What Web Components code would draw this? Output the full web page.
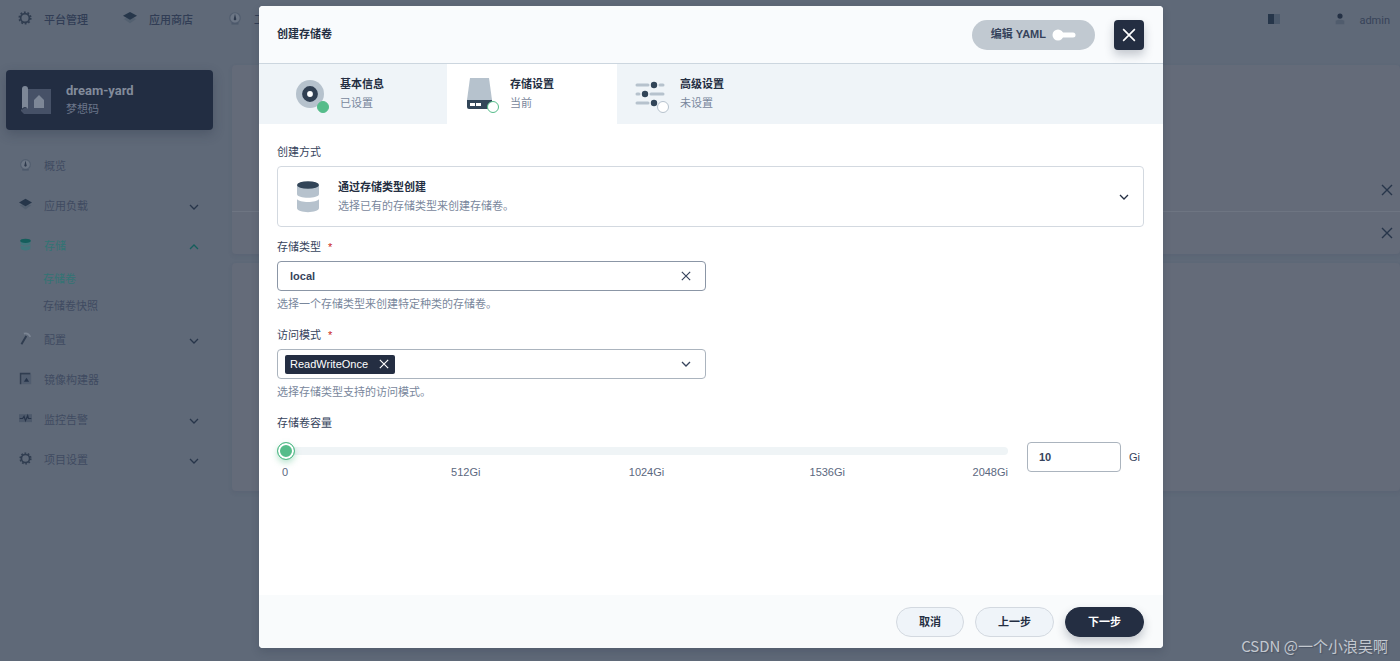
<!DOCTYPE html>
<html lang="zh-CN">
<head>
<meta charset="utf-8">
<meta name="viewport" content="width=device-width, initial-scale=1">
<title>创建存储卷</title>
<style>
  html, body { margin: 0; min-height: 100vh; }
  body {
    background: #5f6978;
    color: #3b475c;
    font: 11px/19px "Liberation Sans", "Noto Sans CJK SC", sans-serif;
    --ink: #242e42;
    --muted: #79879c;
    --green: #55bc8a;
    --line: #d3d9e0;
  }
</style>
</head>
<body>
<ks-app></ks-app>
<ks-modal>
  <span slot="title">创建存储卷</span>
  <ks-tab slot="tabs" icon="disc" state="done"><span>基本信息</span><span slot="status">已设置</span></ks-tab>
  <ks-tab slot="tabs" icon="drive" state="current"><span>存储设置</span><span slot="status">当前</span></ks-tab>
  <ks-tab slot="tabs" icon="sliders" state="todo"><span>高级设置</span><span slot="status">未设置</span></ks-tab>
  <ks-volume-form></ks-volume-form>
  <ks-button slot="footer">取消</ks-button>
  <ks-button slot="footer">上一步</ks-button>
  <ks-button slot="footer" primary>下一步</ks-button>
</ks-modal>
<ks-watermark>CSDN @一个小浪吴啊</ks-watermark>

<script>
const ICONS = {
  gear: ['0 0 16 16', '<g fill="none" stroke="#303d50"><circle cx="8" cy="8" r="5" stroke-width="2"/><circle cx="8" cy="8" r="6.6" stroke-width="1.8" stroke-dasharray="2.1 2.05"/></g>'],
  layers: ['0 0 16 16', '<path fill="#536070" d="M1 9l7-3 7 3-7 5z"/><path fill="#26364a" d="M0 5.5L8 1l8 4.500L8 10z"/>'],
  gauge: ['0 0 16 16', '<circle cx="8" cy="8" r="6" fill="#6c7685" stroke="#525e6f" stroke-width="1.4"/><path fill="#2d394c" d="M8 3l1.2 5.2a1.5 1.5 0 1 1-2.4 0z"/><path d="M4 14.500h8" stroke="#4d596b" stroke-width="2"/>'],
  store: ['0 0 16 16', '<path fill="#40767c" d="M2 3v10c0 3 12 3 12 0V3z"/><path d="M2 8c0 2.600 12 2.600 12 0" fill="none" stroke="#5f6978"/><ellipse cx="8" cy="3.400" rx="6.500" ry="2.600" fill="#155e5c"/>'],
  hammer: ['0 0 16 16', '<path d="M3 15L9 5" stroke="#303d50" stroke-width="2.400"/><path d="M6 2c3-1 6 0 8 4" fill="none" stroke="#7b8593" stroke-width="2"/>'],
  image: ['0 0 16 16', '<path fill="#515d6f" d="M4 3h11v12H4z"/><path d="M2 15V2h12" fill="none" stroke="#303d50" stroke-width="2"/><path fill="#26344a" d="M6 12l3.200-5 3.300 5z"/>'],
  monitor: ['0 0 18 16', '<path fill="#4d596b" d="M0 2h18v11H0z"/><path d="M1 8h4l2-3 2 6 3-7 1 4h4" fill="none" stroke="#273449" stroke-width="1.600"/>'],
  down: ['0 0 12 12', '<path d="M2 4l4 4 4-4" fill="none" stroke="currentColor" stroke-width="1.300"/>'],
  up: ['0 0 12 12', '<path d="M2 8l4-4 4 4" fill="none" stroke="currentColor" stroke-width="1.300"/>'],
  close: ['0 0 12 12', '<path d="M1 1l10 10M11 1L1 11" fill="none" stroke="currentColor" stroke-width="1.400"/>'],
  book: ['0 0 14 12', '<path fill="#26364a" d="M1 1h6v10H1z"/><path fill="#4b596b" d="M7 1h6v10H7z"/>'],
  user: ['0 0 12 14', '<path fill="#505c6d" d="M1 13V9l3-1h4l3 1v4z"/><circle cx="6" cy="3.600" r="3" fill="#243145"/>'],
  blueprint: ['0 0 30 30', '<path fill="#465167" d="M6 4h24v25H4z"/><path fill="#7d8797" d="M1 4a3 3 0 0 1 6 0v20a3 3 0 0 0-6 3z"/><path fill="#465167" d="M1 27a3 3 0 0 1 5-3v5H3z"/><path fill="#7d8797" d="M13 23v-8l5-5 5 5v8z"/>'],
  disc: ['0 0 30 30', '<circle cx="15" cy="15" r="14" fill="#b6c2cd"/><circle cx="15" cy="15" r="5.400" fill="#fff" stroke="#303f52" stroke-width="5"/>'],
  drive: ['0 0 30 34', '<path fill="#b6c2cd" d="M5 1h19l3 22H2z"/><path fill="#324558" d="M2 23h25v7a2 2 0 0 1-2 2H4a2 2 0 0 1-2-2z"/><path fill="#fff" d="M5 26h5v3H5zM11 26h5v3h-5z"/>'],
  sliders: ['0 0 30 30', '<path d="M2 6h11M25 6h3M2 15h2M16 15h12M2 24h11" stroke="#b6c2cd" stroke-width="3" stroke-linecap="round"/><g fill="#324558"><circle cx="19" cy="6" r="3.200"/><circle cx="10" cy="15" r="3.200"/><circle cx="19" cy="24" r="3.200"/></g>'],
  database: ['0 0 24 34', '<path fill="#b6c2cd" d="M1 5v9c0 5 22 5 22 0V5zM1 19v9c0 5.500 22 5.500 22 0v-9c-2 4-20 4-22 0z"/><ellipse cx="12" cy="5" rx="11" ry="3.800" fill="#324558"/>']
};

function define(tag, html, setup) {
  const template = document.createElement('template');
  template.innerHTML = html;
  customElements.define(tag, class extends HTMLElement {
    connectedCallback() {
      if (this.shadowRoot) return;
      this.attachShadow({ mode: 'open' }).append(template.content.cloneNode(true));
      if (setup) setup(this, this.shadowRoot);
    }
  });
}

define('ks-icon', `<style>
  :host { display: inline-flex; flex: none; width: 12px; height: 12px; }
  svg { width: 100%; height: 100%; display: block; }
</style><svg aria-hidden="true"></svg>`, (host, root) => {
  const [box, art] = ICONS[host.getAttribute('name')];
  const svg = root.querySelector('svg');
  svg.setAttribute('viewBox', box);
  svg.innerHTML = art;
});

define('ks-topbar', `<style>
  :host { display: flex; align-items: center; justify-content: space-between; height: 40px; padding: 0 10px 0 18px; }
  nav { display: flex; gap: 35px; }
  a { display: flex; align-items: center; gap: 12px; color: #313d55; text-decoration: none; white-space: nowrap; font-weight: 500; }
  a ks-icon { width: 14px; height: 14px; margin-bottom: 4px; }
  .right { display: flex; align-items: center; gap: 52px; }
  .right ks-icon { width: 14px; margin-bottom: 2px; }
  button { display: flex; align-items: center; gap: 12px; border: 0; padding: 0; background: none; color: #374359; font: 11px/19px Roboto, sans-serif; }
</style>
<nav aria-label="主导航">
  <a href="#platform"><ks-icon name="gear"></ks-icon>平台管理</a>
  <a href="#store"><ks-icon name="layers"></ks-icon>应用商店</a>
  <a href="#workbench"><ks-icon name="gauge"></ks-icon>工作台</a>
</nav>
<div class="right"><ks-icon name="book"></ks-icon><button type="button"><ks-icon name="user"></ks-icon>admin</button></div>`);

define('ks-project-card', `<style>
  :host { display: flex; align-items: center; gap: 15px; height: 60px; padding: 0 15px; border-radius: 4px; background: #222d42; box-shadow: 0 4px 12px rgba(36,46,66,.3); }
  ks-icon { width: 30px; height: 30px; }
  div { display: flex; flex-direction: column; color: #6c768a; }
  strong { font: 700 13px/19px Roboto, sans-serif; color: #8089a0; color: #828b9b; }
</style><ks-icon name="blueprint"></ks-icon><div><strong>dream-yard</strong><slot></slot></div>`);

define('ks-nav-item', `<style>
  :host { display: block; color: #3f4b61; }
  :host([active]) { color: #327474; }
  a { display: flex; align-items: center; gap: 12px; height: 40px; padding: 0 13px; color: inherit; text-decoration: none; }
  ks-icon { width: 13px; height: 13px; margin-bottom: 3px; }
  .label { flex: 1; }
  .arrow { width: 12px; height: 12px; margin: 2px 0 0; color: #27354a; }
  :host([active]) .arrow { color: #155e5c; }
  :host([sub]) a { height: 27px; padding-left: 37px; }
</style><a href="#nav"><span class="label"><slot></slot></span></a>`, (host, root) => {
  const link = root.querySelector('a');
  const add = (name, where) => {
    const icon = document.createElement('ks-icon');
    icon.setAttribute('name', name);
    if (where === 'append') icon.className = 'arrow';
    link[where](icon);
  };
  if (host.hasAttribute('icon')) add(host.getAttribute('icon'), 'prepend');
  if (host.hasAttribute('arrow')) add(host.getAttribute('arrow'), 'append');
});

define('ks-app', `<style>
  :host { display: block; min-height: 100vh; overflow: hidden; }
  .columns { display: grid; grid-template-columns: 207px minmax(0, 1fr); gap: 19px; padding: 25px 0 0 6px; }
  aside { padding-top: 5px; }
  nav { margin-top: 16px; }
  main { display: flex; flex-direction: column; gap: 9px; }
  section { border-radius: 4px; background: #646b79; box-shadow: 0 2px 4px rgba(54,67,90,.12); }
  .notices { padding-top: 104px; }
  .row { display: flex; justify-content: flex-end; align-items: center; height: 42px; padding-right: 7px; }
  .row + .row { border-top: 1px solid #6e7582; }
  .row button { display: flex; border: 0; padding: 0; background: none; color: #27354a; }
  .list { height: 228px; }
</style>
<ks-topbar></ks-topbar>
<div class="columns">
  <aside>
    <ks-project-card>梦想码</ks-project-card>
    <nav aria-label="项目导航">
      <ks-nav-item icon="gauge">概览</ks-nav-item>
      <ks-nav-item icon="layers" arrow="down">应用负载</ks-nav-item>
      <ks-nav-item icon="store" arrow="up" active>存储</ks-nav-item>
      <ks-nav-item sub active>存储卷</ks-nav-item>
      <ks-nav-item sub>存储卷快照</ks-nav-item>
      <ks-nav-item icon="hammer" arrow="down">配置</ks-nav-item>
      <ks-nav-item icon="image">镜像构建器</ks-nav-item>
      <ks-nav-item icon="monitor" arrow="down">监控告警</ks-nav-item>
      <ks-nav-item icon="gear" arrow="down">项目设置</ks-nav-item>
    </nav>
  </aside>
  <main>
    <section class="notices">
      <div class="row"><button type="button" aria-label="关闭提示"><ks-icon name="close"></ks-icon></button></div>
      <div class="row"><button type="button" aria-label="关闭提示"><ks-icon name="close"></ks-icon></button></div>
    </section>
    <section class="list"></section>
  </main>
</div>`);

define('ks-button', `<style>
  :host { display: inline-flex; }
  button { height: 30px; padding: 0 22px; border: 1px solid var(--line); border-radius: 15px; background: #eff4f9; color: var(--ink); font: inherit; font-weight: 700; }
  :host([primary]) button { border-color: var(--ink); background: var(--ink); color: #fff; box-shadow: 0 5px 10px rgba(36,46,66,.25); }
</style><button type="button"><slot></slot></button>`);

define('ks-tab', `<style>
  :host { display: block; }
  button { display: flex; align-items: center; gap: 15px; width: 170px; height: 60px; padding: 0 18px; border: 0; background: none; font: inherit; text-align: left; }
  :host([state=current]) button { background: #fff; }
  .art { position: relative; display: flex; flex: none; width: 30px; }
  .art ks-icon { width: 30px; height: 34px; }
  .dot { position: absolute; right: -4px; bottom: -2px; box-sizing: border-box; width: 12px; height: 12px; border: 1px solid var(--green); border-radius: 50%; background: #fff; }
  :host([state=done]) .dot { background: var(--green); }
  :host([state=todo]) .dot { border-color: #b6c2cd; }
  .text { display: flex; flex-direction: column; color: var(--muted); }
  strong { color: var(--ink); }
</style><button type="button" role="tab"><span class="art"><span class="dot"></span></span><span class="text"><strong><slot></slot></strong><slot name="status"></slot></span></button>`, (host, root) => {
  const icon = document.createElement('ks-icon');
  icon.setAttribute('name', host.getAttribute('icon'));
  root.querySelector('.art').prepend(icon);
  root.querySelector('button').setAttribute('aria-selected', host.getAttribute('state') === 'current');
  const status = host.querySelector('[slot=status]');
  host.setAttribute('aria-description', status ? status.textContent : '');
});

define('ks-modal', `<style>
  :host { position: absolute; inset: 0; display: flex; padding: 6px 237px 13px 259px; }
  .dialog { flex: 1; min-width: 0; display: flex; flex-direction: column; border-radius: 4px; background: #fff; box-shadow: 0 4px 8px rgba(36,46,66,.2); overflow: hidden; }
  header { display: flex; align-items: center; gap: 19px; height: 57px; padding: 0 19px 0 18px; border-bottom: 1px solid #ccd6df; background: #f9fbfd; }
  h1 { flex: 1; margin: 0; font-size: 11px; line-height: 19px; color: var(--ink); }
  .yaml { display: flex; align-items: center; gap: 6px; height: 30px; padding: 0 19px; border: 0; border-radius: 15px; background: #c1c9d1; color: #36435c; font: inherit; font-weight: 700; }
  .yaml svg { display: block; width: 24px; height: 12px; }
  .close { display: flex; align-items: center; justify-content: center; width: 30px; height: 30px; padding: 0; border: 0; border-radius: 4px; background: var(--ink); color: #fff; box-shadow: 0 5px 10px rgba(36,46,66,.25); }
  .close ks-icon { width: 14px; height: 14px; }
  .tabs { display: flex; padding-left: 18px; background: #eff4f8; }
  .body { flex: 1; padding: 18px 19px 18px 18px; }
  footer { display: flex; justify-content: flex-end; gap: 11px; padding: 12px 19px 11px; background: #f9fbfc; }
</style>
<div class="dialog" role="dialog" aria-labelledby="title">
  <header>
    <h1 id="title"><slot name="title"></slot></h1>
    <button class="yaml" type="button">编辑 YAML<svg viewBox="0 0 24 12" aria-hidden="true"><path d="M8 6h13" stroke="#fff" stroke-width="5" stroke-linecap="round"/><circle cx="6" cy="6" r="5.500" fill="#fff"/></svg></button>
    <button class="close" type="button" aria-label="关闭"><ks-icon name="close"></ks-icon></button>
  </header>
  <div class="tabs" role="tablist"><slot name="tabs"></slot></div>
  <div class="body"><slot></slot></div>
  <footer><slot name="footer"></slot></footer>
</div>`);

define('ks-volume-form', `<style>
  :host { display: block; color: var(--muted); }
  form { display: flex; flex-direction: column; gap: 10px; }
  .field { display: flex; flex-direction: column; gap: 3px; line-height: 21px; }
  .half { width: 50%; min-width: 429px; max-width: 429px; }
  label, .label { color: #36435c; }
  em { margin-left: 4px; color: #ca2621; font-style: normal; }
  .box { box-sizing: border-box; display: flex; align-items: center; width: 100%; height: 30px; padding: 0 13px 0 7px; border: 1px solid #abb4be; border-radius: 4px; background: #fff; color: #36435c; }
  .text { padding-left: 12px; }
  .focus { border-color: #8b96a6; }
  input[type=text], input[type=number] { font: inherit; font-weight: 700; color: #36435c; }
  .text input { flex: 1; min-width: 0; padding: 0; border: 0; outline: 0; background: none; }
  .box button { display: flex; padding: 0; border: 0; background: none; color: inherit; }
  .box button ks-icon { width: 12px; height: 12px; }
  .box .clear { padding: 1px; }
  .box .clear ks-icon { width: 10px; height: 10px; }
  .method { box-sizing: border-box; display: flex; align-items: center; gap: 18px; width: 100%; height: 61px; padding: 0 13px 0 18px; border: 1px solid var(--line); border-radius: 4px; background: #fff; color: var(--muted); font: inherit; line-height: 19px; text-align: left; }
  .method > ks-icon:first-child { width: 24px; height: 34px; }
  .method > ks-icon:last-child { color: var(--ink); }
  .copy { flex: 1; display: flex; flex-direction: column; }
  .copy strong { color: var(--ink); }
  .tag { display: flex; align-items: center; gap: 10px; height: 19px; padding: 0 5px; margin-right: auto; border-radius: 2px; background: var(--ink); color: #fff; }
  .capacity { display: flex; align-items: flex-start; gap: 19px; padding-top: 5px; }
  .slider { flex: 1; color: #5c6880; }
  input[type=range] { -webkit-appearance: none; appearance: none; display: block; width: 100%; height: 18px; margin: 0; background: none; }
  input[type=range]::-webkit-slider-runnable-track { height: 8px; border-radius: 4px; background: #eff4f6; }
  input[type=range]::-webkit-slider-thumb { -webkit-appearance: none; box-sizing: border-box; width: 18px; height: 18px; margin-top: -5px; border: 1px solid var(--green); border-radius: 50%; background: var(--green); box-shadow: inset 0 0 0 2px #fff, 0 3px 6px rgba(85,188,138,.4); }
  ol { display: flex; justify-content: space-between; margin: 2px 0 0; padding: 0 0 0 8px; list-style: none; }
  li { display: flex; justify-content: center; width: 0; white-space: nowrap; }
  li:last-child { justify-content: flex-end; }
  .size { display: flex; align-items: center; gap: 8px; padding-right: 4px; color: #5c6880; }
  .size input { box-sizing: border-box; width: 94px; height: 30px; padding: 0 11px; border: 1px solid #abb4be; border-radius: 4px; appearance: textfield; }
  input[type=number]::-webkit-inner-spin-button { display: none; }
</style>
<form>
  <div class="field">
    <span class="label" id="method">创建方式</span>
    <button class="method" type="button" aria-haspopup="listbox" aria-labelledby="method">
      <ks-icon name="database"></ks-icon>
      <span class="copy"><strong>通过存储类型创建</strong><span>选择已有的存储类型来创建存储卷。</span></span>
      <ks-icon name="down"></ks-icon>
    </button>
  </div>
  <div class="field half">
    <label for="class">存储类型 <em>*</em></label>
    <div class="box text focus"><input id="class" type="text" value="local"><button class="clear" type="button" aria-label="清除"><ks-icon name="close"></ks-icon></button></div>
    <span>选择一个存储类型来创建特定种类的存储卷。</span>
  </div>
  <div class="field half">
    <label for="mode">访问模式 <em>*</em></label>
    <div class="box"><span class="tag">ReadWriteOnce<button class="clear" type="button" aria-label="移除 ReadWriteOnce"><ks-icon name="close"></ks-icon></button></span><button id="mode" type="button" aria-haspopup="listbox" aria-label="访问模式"><ks-icon name="down"></ks-icon></button></div>
    <span>选择存储类型支持的访问模式。</span>
  </div>
  <div class="field">
    <label for="range">存储卷容量</label>
    <div class="capacity">
      <div class="slider">
        <input id="range" type="range" min="0" max="2048" value="0">
        <ol><li>0</li><li>512Gi</li><li>1024Gi</li><li>1536Gi</li><li>2048Gi</li></ol>
      </div>
      <div class="size"><input id="size" type="number" value="10" aria-label="存储卷容量"><label for="size">Gi</label></div>
    </div>
  </div>
</form>`);

define('ks-watermark', `<style>
  :host { position: absolute; right: 12px; bottom: 4px; color: #c3c8cf; font: 15px/22px "Noto Sans CJK SC", sans-serif; text-shadow: 1px 1px 1px #4a5464; }
</style><slot></slot>`);
</script>
</body>
</html>
